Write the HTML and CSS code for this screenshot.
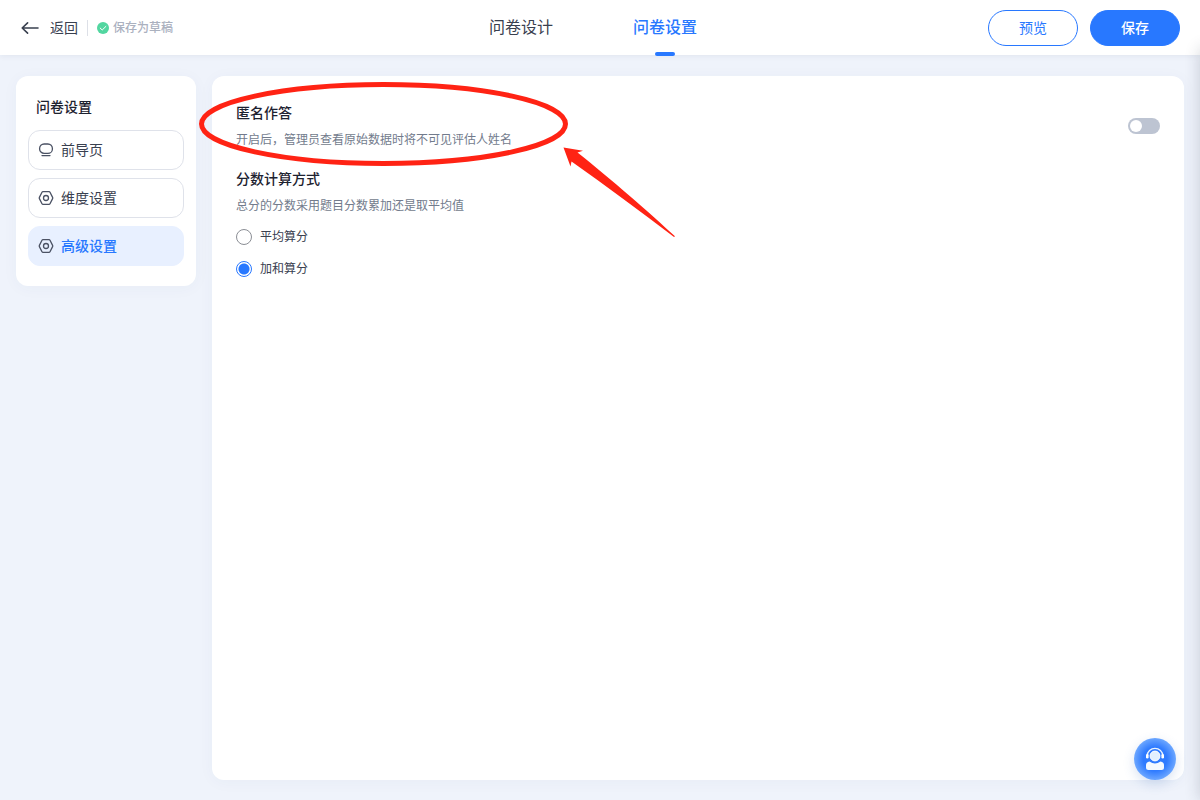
FILE: index.html
```html
<!DOCTYPE html>
<html lang="zh-CN">
<head>
<meta charset="utf-8">
<title>问卷设置</title>
<link rel="stylesheet" href="styles.css">
</head>
<body>
<header class="topbar">
  <div class="topbar-left">
    <button class="back" type="button">
      <svg width="18" height="14" viewBox="0 0 18 14" fill="none" stroke="#39404f" stroke-width="1.6" stroke-linecap="round" stroke-linejoin="round"><path d="M17 7H1.2M6.600 1.800 1.2 7 6.600 12.2"/></svg>
      <span>返回</span>
    </button>
    <span class="divider"></span>
    <span class="draft">
      <svg width="12" height="12" viewBox="0 0 12 12"><circle cx="6" cy="6" r="6" fill="#52d6a0"/><path d="M3.2 6.1 5.2 8l3.7-3.6" fill="none" stroke="#fff" stroke-width="1" stroke-linecap="round" stroke-linejoin="round"/></svg>
      <span>保存为草稿</span>
    </span>
  </div>
  <nav class="tabs">
    <a class="tab" href="#design">问卷设计</a>
    <a class="tab tab-active" href="#settings">问卷设置</a>
  </nav>
  <div class="actions">
    <button class="btn" type="button">预览</button>
    <button class="btn btn-primary" type="button">保存</button>
  </div>
</header>
<div class="layout">
  <aside class="sidebar">
    <h2 class="sidebar-title">问卷设置</h2>
    <nav class="menu">
      <a class="menu-item" href="#intro">
        <svg class="menu-icon" viewBox="0 0 16 16"><rect x="1.6" y="2" width="12.8" height="9.400" rx="4.5"/><path d="M4 13.6h8"/></svg>
        <span>前导页</span>
      </a>
      <a class="menu-item" href="#dimension">
        <svg class="menu-icon" viewBox="0 0 16 16"><path d="M5 1.6h6q.7 0 1 .6l2.6 5.2q.3.6 0 1.2L12 13.8q-.3.6-1 .6H5q-.7 0-1-.6L1.400 8.600q-.3-.6 0-1.200L4 2.200q.3-.6 1-.6z"/><circle cx="8" cy="8" r="2.500"/></svg>
        <span>维度设置</span>
      </a>
      <a class="menu-item menu-item-active" href="#advanced">
        <svg class="menu-icon" viewBox="0 0 16 16"><path d="M5 1.6h6q.7 0 1 .6l2.6 5.2q.3.6 0 1.2L12 13.8q-.3.6-1 .6H5q-.7 0-1-.6L1.400 8.600q-.3-.6 0-1.200L4 2.200q.3-.6 1-.6z"/><circle cx="8" cy="8" r="2.500"/></svg>
        <span>高级设置</span>
      </a>
    </nav>
  </aside>
  <main class="panel">
    <section class="setting setting-row">
      <div>
        <h3 class="setting-title" id="anon-title">匿名作答</h3>
        <p class="setting-desc">开启后，管理员查看原始数据时将不可见评估人姓名</p>
      </div>
      <input class="switch" type="checkbox" role="switch" aria-labelledby="anon-title">
    </section>
    <section class="setting">
      <h3 class="setting-title">分数计算方式</h3>
      <p class="setting-desc">总分的分数采用题目分数累加还是取平均值</p>
      <div class="radios">
        <label class="option"><input class="radio" type="radio" name="score"><span>平均算分</span></label>
        <label class="option"><input class="radio" type="radio" name="score" checked><span>加和算分</span></label>
      </div>
    </section>
    <svg class="annotation" width="480" height="160" viewBox="0 0 480 160">
      <ellipse cx="187.500" cy="48" rx="182" ry="39.500" fill="none" stroke="#ff2314" stroke-width="5"/>
      <path d="M367.500 71.500 387 74.800 381.500 76.500 C415 103 455 138 479 160.300L478 161C445 136 410 110 375.500 85.500L374.500 90.500z" fill="#ff2314"/>
    </svg>
  </main>
</div>
<button class="service" type="button" aria-label="客服">
  <svg width="20" height="24" viewBox="0 0 20 24"><path d="M2.300 9.500V8.500a7.700 7.200 0 0 1 15.400 0v1" fill="none" stroke="#eaf4ff" stroke-width="1.300"/><rect x="1" y="7" width="2.600" height="4.500" rx="1.300" fill="#fff"/><rect x="16.400" y="7" width="2.600" height="4.500" rx="1.300" fill="#fff"/><circle cx="10" cy="9" r="4.900" fill="#e2f0ff" stroke="#fff"/><path d="M4.500 14.500Q10 18.500 15.500 14.500 19 15.300 19 18v2.500Q19 23 16.500 23h-13Q1 23 1 20.500V18q0-2.700 3.500-3.500z" fill="#f4f9ff"/></svg>
</button>
<div class="edge-shadow"></div>
</body>
</html>
```
FILE: styles.css
```css
* { box-sizing: border-box; }
body {
  margin: 0;
  min-height: 100vh;
  display: flex;
  flex-direction: column;
  overflow: hidden;
  background: #eff3fb;
  color: #39404f;
  font: 14px/20px "Liberation Sans", "Noto Sans CJK SC", sans-serif;
}
button { font: inherit; color: inherit; cursor: pointer; }
a { color: inherit; text-decoration: none; }
h2, h3, p { margin: 0; }
svg { display: block; }
.topbar {
  display: grid;
  grid-template-columns: 1fr auto 1fr;
  align-items: center;
  height: 55px;
  padding: 0 20px;
  background: #fff;
  box-shadow: 0 1px 6px rgba(30, 40, 70, 0.07);
}
.topbar-left { display: flex; align-items: center; }
.back {
  display: flex;
  align-items: center;
  gap: 11px;
  padding: 0 0 0 1px;
  border: 0;
  background: none;
}
.divider { width: 1px; height: 16px; margin: 0 9px; background: #dde0e7; }
.draft {
  display: flex;
  align-items: center;
  gap: 4px;
  color: #abb1bf;
  font-size: 12px;
  font-weight: 500;
}
.tabs { display: flex; gap: 80px; height: 55px; padding-right: 14px; }
.tab { position: relative; font-size: 16px; line-height: 55px; }
.tab-active { color: #2878ff; font-weight: 500; }
.tab-active::after {
  content: "";
  position: absolute;
  left: 50%;
  bottom: -1px;
  width: 20px;
  height: 4px;
  margin-left: -10px;
  border-radius: 2px;
  background: #2878ff;
}
.actions { display: flex; justify-content: flex-end; gap: 12px; }
.btn {
  width: 90px;
  height: 36px;
  padding: 0;
  border: 1px solid #2878ff;
  border-radius: 18px;
  background: #fff;
  color: #2878ff;
}
.btn-primary { background: #2878ff; color: #fff; font-weight: 500; }
.layout {
  flex: 1;
  display: flex;
  align-items: flex-start;
  gap: 16px;
  padding: 21px 16px 20px;
}
.sidebar {
  width: 180px;
  flex: none;
  padding: 20px 12px;
  border-radius: 12px;
  background: #fff;
  box-shadow: 0 2px 16px rgba(40, 70, 120, 0.04);
}
.sidebar-title {
  padding-left: 8px;
  margin-bottom: 12px;
  color: #1d2230;
  font-size: 14px;
  line-height: 22px;
  font-weight: 500;
}
.menu { display: flex; flex-direction: column; gap: 8px; }
.menu-item {
  display: flex;
  align-items: center;
  gap: 7px;
  height: 40px;
  padding: 0 9px;
  border: 1px solid #dfe2ea;
  border-radius: 12px;
}
.menu-item-active {
  border-color: #e8f0ff;
  background: #e8f0ff;
  color: #2878ff;
  font-weight: 500;
}
.menu-icon {
  width: 16px;
  height: 16px;
  fill: none;
  stroke: #4b5264;
  stroke-width: 1.3;
  stroke-linecap: round;
  stroke-linejoin: round;
}
.panel {
  position: relative;
  flex: 1;
  align-self: stretch;
  display: flex;
  flex-direction: column;
  gap: 18px;
  padding: 26px 24px;
  border-radius: 12px;
  background: #fff;
  box-shadow: 0 2px 16px rgba(40, 70, 120, 0.04);
}
.setting-row { display: flex; justify-content: space-between; align-items: center; }
.setting-title {
  margin-bottom: 6px;
  color: #1d2230;
  font-size: 14px;
  line-height: 22px;
  font-weight: 500;
}
.setting-desc { color: #727b8c; font-size: 12px; }
.radios { display: flex; flex-direction: column; gap: 12px; margin-top: 11px; }
.option { display: flex; align-items: center; gap: 8px; font-size: 12px; }
.radio {
  appearance: none;
  width: 16px;
  height: 16px;
  margin: 0;
  border: 1px solid #8b8e95;
  border-radius: 50%;
  background: #fff;
}
.radio:checked {
  border-color: #2878ff;
  background: radial-gradient(circle, #2878ff 5px, #fff 6px);
}
.switch {
  appearance: none;
  width: 32px;
  height: 16px;
  margin: 0;
  border-radius: 8px;
  background: #bdc4d2;
}
.switch::before {
  content: "";
  display: block;
  width: 12px;
  height: 12px;
  margin: 2px;
  border-radius: 50%;
  background: #fff;
}
.annotation {
  position: absolute;
  left: -16px;
  top: 0;
  overflow: visible;
  pointer-events: none;
}
.service {
  position: fixed;
  right: 24px;
  bottom: 20px;
  display: flex;
  align-items: center;
  justify-content: center;
  width: 42px;
  height: 42px;
  padding: 0;
  border: 0;
  border-radius: 50%;
  background: radial-gradient(circle, #2f7bff 40%, #6ba6ff 70%);
  box-shadow: 0 4px 12px rgba(60, 110, 190, 0.2);
}
.edge-shadow {
  position: fixed;
  left: 100%;
  top: 48px;
  bottom: 0;
  width: 20px;
  box-shadow: 0 0 16px rgba(30, 40, 60, 0.2);
}
```
